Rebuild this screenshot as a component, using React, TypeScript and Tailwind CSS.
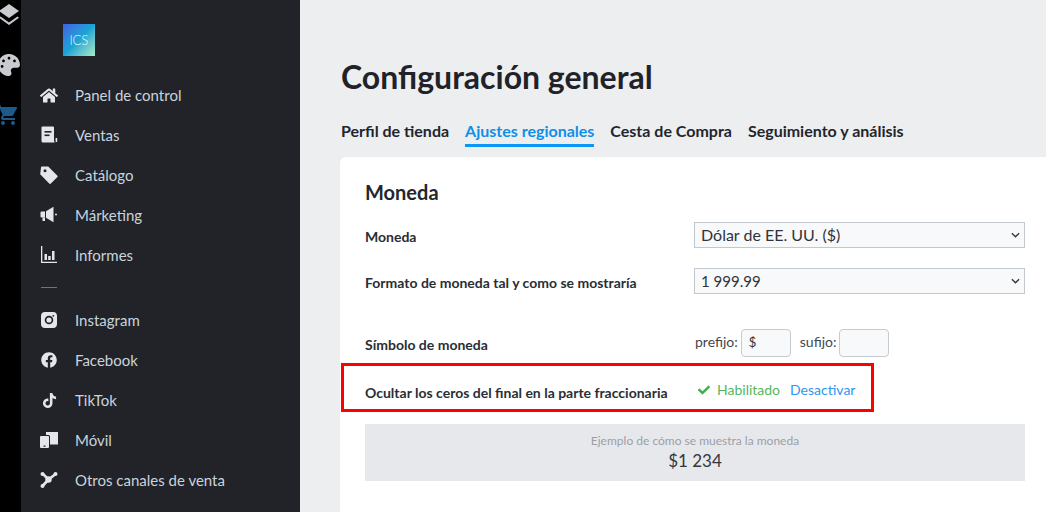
import React from 'react';
import { FaCheck, FaFacebook, FaHome, FaPalette, FaTiktok } from 'react-icons/fa';
import { MdShoppingCart } from 'react-icons/md';

function LayersIcon() {
  return (
    <svg viewBox="0 0 20 22" className="shrink-0 w-5 h-[22px] mt-1 -ml-[3px] text-[#c9cbd0]" fill="currentColor">
      <path d="M10 0l10 7-10 7L0 7z" />
      <path d="M1.500 12.500 10 18.500l8.500-6 1.500 1.200L10 21 0 13.700z" />
    </svg>
  );
}

function SalesIcon() {
  return (
    <svg viewBox="0 0 18 18" className="w-[18px] h-[18px]" fill="currentColor">
      <path d="M1.500 1.500a1 1 0 0 1 1-1h10.500a1 1 0 0 1 1 1v13c0 .8.400 1.600 1 2H3a1.500 1.500 0 0 1-1.500-1.500z" />
      <rect x="4.500" y="5" width="7" height="1.600" fill="#212328" />
      <rect x="4.500" y="8.500" width="5" height="1.600" fill="#212328" />
      <rect x="15.600" y="12" width="1.600" height="4" />
    </svg>
  );
}

function TagIcon() {
  return (
    <svg viewBox="0 0 18 18" className="w-[18px] h-[18px]" fill="currentColor">
      <path fillRule="evenodd" d="M1 1.500A1 1 0 0 1 2 .5h6.200l9 9a1.200 1.200 0 0 1 0 1.700l-6.300 6.300a1.200 1.200 0 0 1-1.700 0l-9-9.200zM5 6.300a1.500 1.500 0 1 0 0-3 1.500 1.500 0 0 0 0 3z" />
    </svg>
  );
}

function MegaphoneIcon() {
  return (
    <svg viewBox="0 0 18 18" className="w-[18px] h-[18px]" fill="currentColor">
      <path d="M.5 6.500a1 1 0 0 1 1-1h3.500v6h-3.500a1 1 0 0 1-1-1z" />
      <path d="M6 5.300 13.500.8v15.400L6 11.700z" />
      <rect x="15" y="7.500" width="2" height="2" rx="1" />
      <rect x="2.500" y="11.500" width="2.500" height="3.500" />
    </svg>
  );
}

function ChartIcon() {
  return (
    <svg viewBox="0 0 18 18" className="w-[18px] h-[18px]" fill="currentColor">
      <path d="M1 0h1.300v15.700H17V17H1z" />
      <rect x="4.500" y="8" width="2.500" height="6" />
      <rect x="8.200" y="10" width="2.500" height="4" />
      <rect x="12" y="5" width="2.500" height="9" />
    </svg>
  );
}

function InstagramIcon() {
  return (
    <svg viewBox="0 0 16 16" className="w-4 h-4" fill="currentColor">
      <path fillRule="evenodd" d="M4 0h8a4 4 0 0 1 4 4v8a4 4 0 0 1-4 4H4a4 4 0 0 1-4-4V4a4 4 0 0 1 4-4zm4 3.700a4.300 4.300 0 1 0 0 8.600 4.300 4.300 0 0 0 0-8.600zm0 1.700a2.600 2.600 0 1 1 0 5.200 2.600 2.600 0 0 1 0-5.200zm4.300-2.500a.9.9 0 1 0 0 1.800.9.9 0 0 0 0-1.800z" />
    </svg>
  );
}

function MobileIcon() {
  return (
    <svg viewBox="0 0 18 16" className="w-[18px] h-4" fill="currentColor">
      <path d="M6 0h12v12.500h-8V4.500a1.500 1.500 0 0 0-1.500-1.500H6z" />
      <path fillRule="evenodd" d="M1 4h7a1 1 0 0 1 1 1v10a1 1 0 0 1-1 1H1a1 1 0 0 1-1-1V5a1 1 0 0 1 1-1zm2.500 9.500v1.200h2v-1.200z" />
    </svg>
  );
}

function ChannelsIcon() {
  return (
    <svg viewBox="0 0 18 16" className="w-[18px] h-4" fill="currentColor">
      <path d="M3 2 8.500 7.500l6.500-5M8.500 7.500 2.500 14" strokeWidth="2.600" stroke="currentColor" fill="none" />
      <circle cx="8.500" cy="7.500" r="3.200" />
      <circle cx="2.500" cy="2" r="2" />
      <circle cx="15.500" cy="2" r="2" />
      <circle cx="2.500" cy="14" r="2" />
    </svg>
  );
}

function Chevron() {
  return (
    <svg viewBox="0 0 10 6" className="w-[9px] h-[6px]" fill="none" stroke="#33373d" strokeWidth="1.500">
      <path d="M1 1l4 4 4-4" />
    </svg>
  );
}

const mainNav = [
  { label: 'Panel de control', icon: <FaHome className="w-[19px] h-[19px]" /> },
  { label: 'Ventas', icon: <SalesIcon /> },
  { label: 'Catálogo', icon: <TagIcon /> },
  { label: 'Márketing', icon: <MegaphoneIcon /> },
  { label: 'Informes', icon: <ChartIcon /> },
];

const channelNav = [
  { label: 'Instagram', icon: <InstagramIcon /> },
  { label: 'Facebook', icon: <FaFacebook className="w-4 h-4" /> },
  { label: 'TikTok', icon: <FaTiktok className="w-[15px] h-[15px]" /> },
  { label: 'Móvil', icon: <MobileIcon /> },
  { label: 'Otros canales de venta', icon: <ChannelsIcon /> },
];

function NavItem({ label, icon }: { label: string; icon: React.ReactNode }) {
  return (
    <div className="h-10 flex items-center pl-[19px]">
      <div className="w-[18px] flex justify-center text-[#e4e6ea]">{icon}</div>
      <span className="ml-[17px] text-[15px] text-[#c9d3de]">{label}</span>
    </div>
  );
}

export default function App() {
  return (
    <div className="relative w-[1046px] h-[512px] overflow-hidden flex bg-[#edeef0] font-['Lato','Liberation_Sans',sans-serif]">
      {/* Icon rail */}
      <div className="w-[21px] shrink-0 bg-black flex flex-col items-center overflow-hidden">
        <LayersIcon />
        <FaPalette className="shrink-0 w-[22px] h-[22px] mt-[28px] -ml-[4px] text-[#c9cbd0]" />
        <MdShoppingCart className="shrink-0 w-[24px] h-[24px] mt-[27px] -ml-[6px] text-[#1b5a8c]" />
      </div>

      {/* Sidebar */}
      <div className="w-[279px] shrink-0 bg-[#212328]">
        <div className="ml-[42px] mt-6 w-8 h-8 bg-gradient-to-br from-[#3f5fe0] via-[#17a5d6] to-[#a5ecc0] flex items-center justify-center">
          <span className="text-[13px] leading-none font-light text-white/90">lCS</span>
        </div>
        <div className="mt-[19px]">
          {mainNav.map((item) => (
            <NavItem key={item.label} label={item.label} icon={item.icon} />
          ))}
        </div>
        <div className="ml-5 mt-3 mb-3 w-4 h-px bg-[#70747a]" />
        <div>
          {channelNav.map((item) => (
            <NavItem key={item.label} label={item.label} icon={item.icon} />
          ))}
        </div>
      </div>

      {/* Main content */}
      <div className="flex-1 pl-10 min-w-0">
        <h1 className="mt-[57px] ml-px text-[32px] leading-10 font-bold text-[#1f2329]">Configuración general</h1>
        <div className="mt-5 ml-px flex gap-4 text-base font-bold text-[#22262c]">
          <div className="h-[30px] pt-[2px]">Perfil de tienda</div>
          <div className="h-[30px] pt-[2px] text-[#0e8fe8] border-b-[3px] border-[#0a97f5]">Ajustes regionales</div>
          <div className="h-[30px] pt-[2px]">Cesta de Compra</div>
          <div className="h-[30px] pt-[2px]">Seguimiento y análisis</div>
        </div>
        <div className="mt-[10px] w-[720px] h-[400px] bg-white rounded-t-md pl-[25px] pt-[21px]">
          <h2 className="text-[20px] leading-7 font-bold text-[#23272d]">Moneda</h2>

          <div className="mt-4 flex items-center h-[26px]">
            <div className="w-[329px] text-sm font-bold text-[#2a2e34] pt-1">Moneda</div>
            <div className="w-[331px] h-[26px] border border-[#c3c8cf] bg-[#f8f9fa] flex items-center justify-between pl-[6px] pr-[4px] text-base text-[#30343a]">
              <span>Dólar de EE. UU. ($)</span>
              <Chevron />
            </div>
          </div>

          <div className="mt-5 flex items-center h-[26px]">
            <div className="w-[329px] text-sm font-bold text-[#2a2e34] pt-1">Formato de moneda tal y como se mostraría</div>
            <div className="w-[331px] h-[26px] border border-[#c3c8cf] bg-[#f8f9fa] flex items-center justify-between pl-[6px] pr-[4px] text-[15px] text-[#30343a]">
              <span>1 999.99</span>
              <Chevron />
            </div>
          </div>

          <div className="mt-[35px] flex items-center h-7">
            <div className="w-[330px] text-sm font-bold text-[#2a2e34] pt-1">Símbolo de moneda</div>
            <span className="text-sm text-[#44484e] -mt-[3px]">prefijo:</span>
            <div className="ml-[3px] w-[50px] h-7 border border-[#c6cbd2] rounded-[4px] bg-[#f8f9fa] flex items-center pl-[7px] text-[13px] text-[#30343a]">$</div>
            <span className="ml-[9px] text-sm text-[#44484e] -mt-[3px]">sufijo:</span>
            <div className="ml-[3px] w-[50px] h-7 border border-[#c6cbd2] rounded-[4px] bg-[#f8f9fa]" />
          </div>

          <div className="mt-[21px] flex items-center h-6">
            <div className="w-[333px] text-sm font-bold text-[#2a2e34] pt-[6px]">Ocultar los ceros del final en la parte fraccionaria</div>
            <FaCheck className="w-3 h-3 text-[#36b44a]" />
            <span className="ml-[7px] text-sm text-[#52b85f]">Habilitado</span>
            <span className="ml-[10px] text-sm text-[#2f96ee]">Desactivar</span>
          </div>

          <div className="mt-[22px] w-[660px] h-[57px] bg-[#e7e8ec] flex flex-col items-center pt-[9px]">
            <div className="text-xs leading-4 text-[#9a9fa8]">Ejemplo de cómo se muestra la moneda</div>
            <div className="text-[17px] leading-5 text-[#33373d] mt-[2px]">$1 234</div>
          </div>
        </div>
      </div>

      {/* Red highlight annotation */}
      <div className="absolute left-[341px] top-[363px] w-[533px] h-[49px] border-[3px] border-[#ff0000]" />
    </div>
  );
}
